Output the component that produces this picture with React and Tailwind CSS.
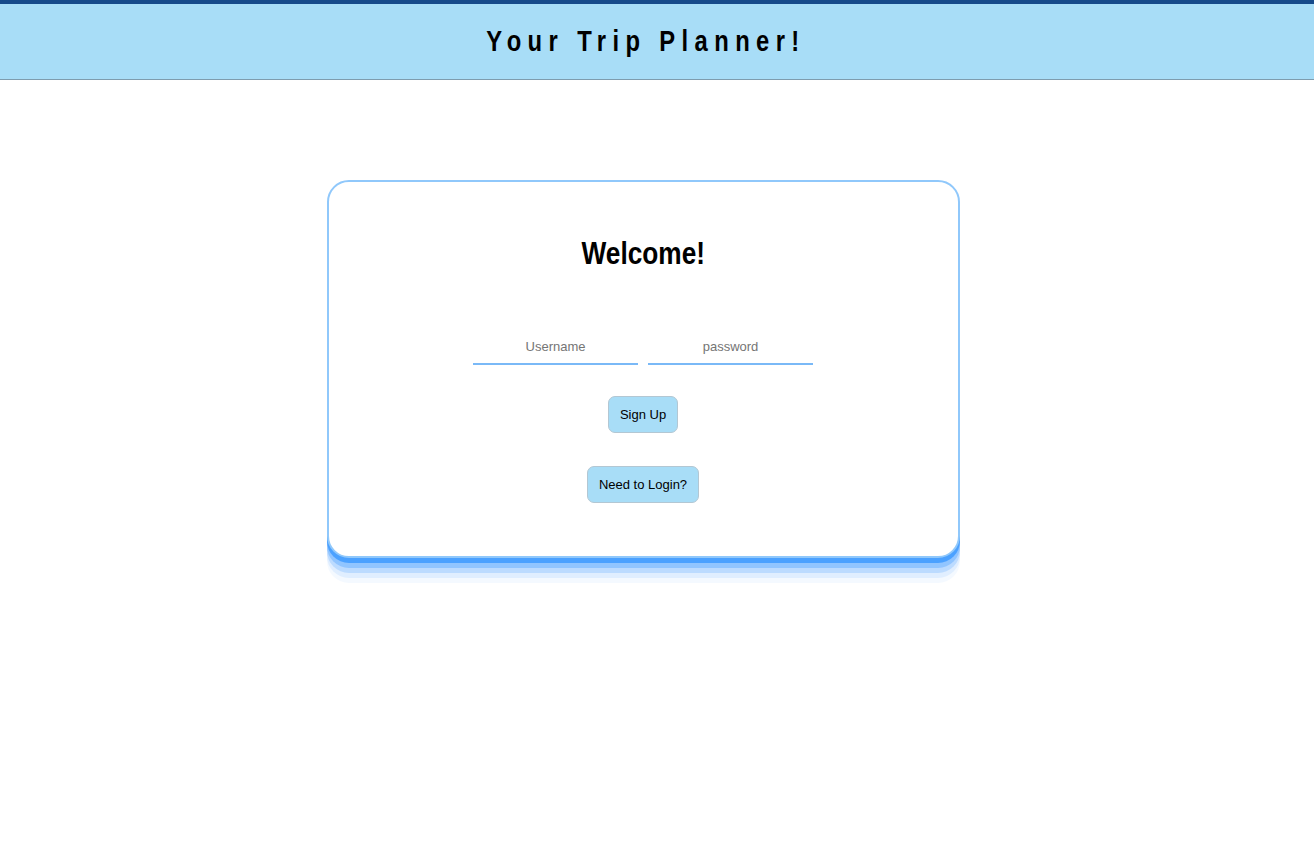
import { useState } from 'react'

export default function App() {
  const [form, setForm] = useState({ username: '', password: '' })

  const handleChange = (event) => {
    const { name, value } = event.target
    setForm((prev) => ({ ...prev, [name]: value }))
  }

  return (
    <div className="min-h-screen bg-white font-['Liberation_Sans',Arial,sans-serif]">
      <header className="h-[80px] bg-[#a8ddf7] border-t-4 border-t-[#164a8a] border-b border-b-[#7e9cae] flex items-center justify-center pr-[28px]">
        <h1 className="inline-block scale-x-[0.82] font-bold text-[29px] tracking-[7.8px] pl-[7.8px] text-black">
          Your Trip Planner!
        </h1>
      </header>

      <main className="flex justify-center pt-[100px] pr-[28px]">
        <div className="w-[633px] bg-white border-2 border-[#90c8fb] rounded-[22px] flex flex-col items-center pt-[51px] pb-[53px] shadow-[0_5px_0_rgba(46,146,255,0.7),0_10px_0_rgba(46,146,255,0.3),0_15px_0_rgba(46,146,255,0.2),0_20px_0_rgba(46,146,255,0.1),0_25px_0_rgba(46,146,255,0.05)]">
          <h2 className="inline-block scale-x-[0.82] font-bold text-[32px] leading-[40px] text-black">
            Welcome!
          </h2>

          <div className="flex gap-[10px] mt-[57px]">
            <input
              name="username"
              value={form.username}
              onChange={handleChange}
              placeholder="Username"
              className="w-[165px] h-[35px] text-center text-[13px] border-b-2 border-b-[#7ab9f7] outline-none placeholder:text-[#757575]"
            />
            <input
              name="password"
              type="password"
              value={form.password}
              onChange={handleChange}
              placeholder="password"
              className="w-[165px] h-[35px] text-center text-[13px] border-b-2 border-b-[#7ab9f7] outline-none placeholder:text-[#757575]"
            />
          </div>

          <button className="mt-[31px] h-[37px] px-[11px] bg-[#a8ddf7] border border-[#b3c7d3] rounded-[7px] text-[13px] text-black">
            Sign Up
          </button>

          <button className="mt-[33px] h-[37px] px-[11px] bg-[#a8ddf7] border border-[#b3c7d3] rounded-[7px] text-[13px] text-black">
            Need to Login?
          </button>
        </div>
      </main>
    </div>
  )
}
